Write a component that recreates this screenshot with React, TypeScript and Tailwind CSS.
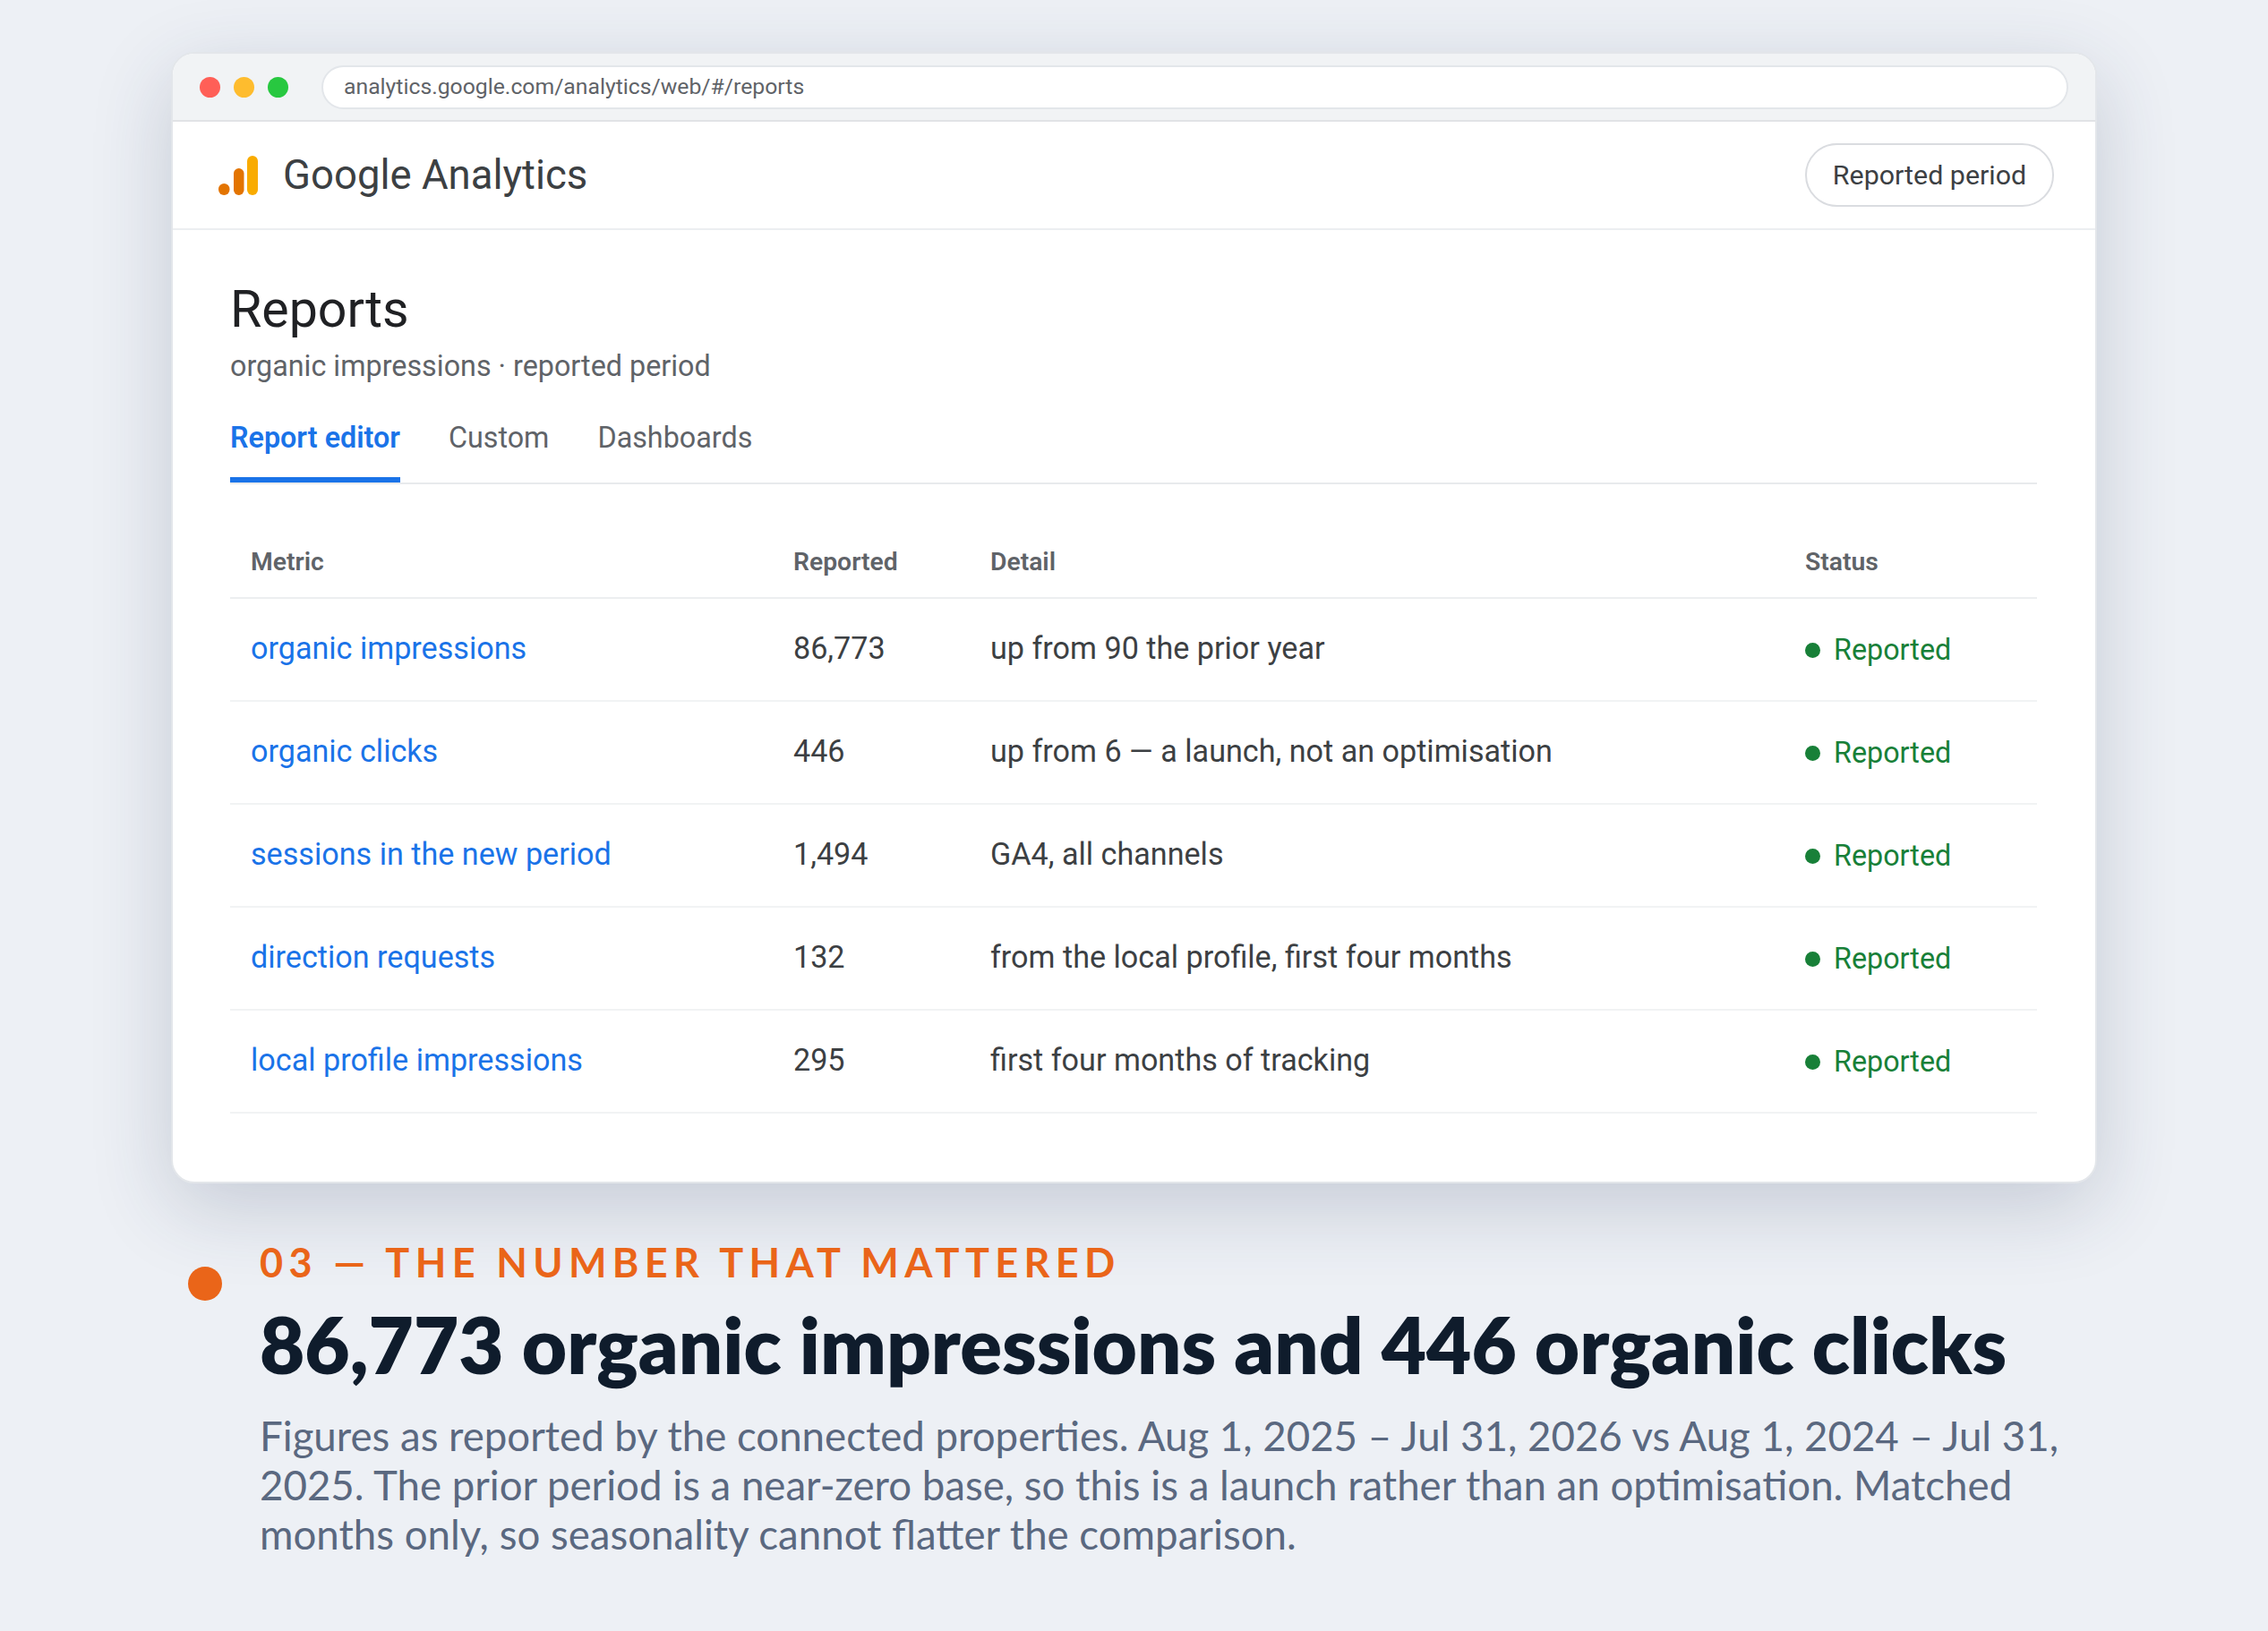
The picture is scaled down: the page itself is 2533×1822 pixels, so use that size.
const rows = [
  { metric: 'organic impressions', value: '86,773', detail: 'up from 90 the prior year' },
  { metric: 'organic clicks', value: '446', detail: 'up from 6 — a launch, not an optimisation' },
  { metric: 'sessions in the new period', value: '1,494', detail: 'GA4, all channels' },
  { metric: 'direction requests', value: '132', detail: 'from the local profile, first four months' },
  { metric: 'local profile impressions', value: '295', detail: 'first four months of tracking' },
];

const App = () => {
  return (
    <div className="min-h-screen w-full bg-[#edf0f5] px-[191px] pt-[58px] [font-family:Roboto,sans-serif]">
      <div className="h-[1264px] w-[2151px] overflow-hidden rounded-[26px] border-2 border-[#e3e6ea] bg-white shadow-[0_26px_90px_rgba(40,55,90,0.2)]">
        <div className="flex h-[76px] items-center border-b-2 border-[#e1e3e6] bg-[#f1f3f5] pl-[30px] pr-[30px]">
          <div className="flex gap-[15px]">
            <span className="h-[23px] w-[23px] rounded-full bg-[#ff5f57]" />
            <span className="h-[23px] w-[23px] rounded-full bg-[#febc2e]" />
            <span className="h-[23px] w-[23px] rounded-full bg-[#28c840]" />
          </div>
          <div className="ml-[37px] flex h-[49px] flex-1 items-center rounded-full border-2 border-[#e3e6ea] bg-white pl-[23px] text-[24.75px] text-[#5f6368]">
            analytics.google.com/analytics/web/#/reports
          </div>
        </div>

        <div className="flex h-[121px] items-center justify-between border-b-2 border-[#eceef1] pl-[51px] pr-[46px]">
          <div className="flex items-center gap-[28px]">
            <svg width="44" height="44" viewBox="0 0 44 44">
              <rect x="0" y="31" width="12.5" height="13" rx="6.25" fill="#e37400" />
              <rect x="17" y="14" width="11.5" height="30" rx="5.75" fill="#e37400" />
              <rect x="32" y="0" width="12" height="44" rx="6" fill="#f9ab00" />
            </svg>
            <span className="pt-[2px] text-[45.5px] text-[#3c4043]">Google Analytics</span>
          </div>
          <div className="flex h-[71px] w-[278px] items-center justify-center rounded-full border-2 border-[#dadce0] text-[30.4px] text-[#3c4043]">
            Reported period
          </div>
        </div>

        <div className="pl-[64px] pr-[65px] pt-[56px]">
          <h1 className="text-[57.3px] leading-[66px] text-[#202124]">Reports</h1>
          <p className="mt-[8px] text-[32.3px] leading-[44px] text-[#5f6368]">organic impressions · reported period</p>

          <div className="mt-[34px] flex h-[76px] gap-[54px] border-b-2 border-[#e8eaed] text-[32.3px] text-[#5f6368]">
            <div className="border-b-[6px] border-[#1a73e8] font-semibold text-[#1a73e8]">Report editor</div>
            <div>Custom</div>
            <div>Dashboards</div>
          </div>

          <table className="mt-[45px] w-full table-fixed border-collapse text-left">
            <colgroup>
              <col className="w-[605px]" />
              <col className="w-[220px]" />
              <col className="w-[910px]" />
              <col className="w-[283px]" />
            </colgroup>
            <thead>
              <tr className="h-[82px] border-b-2 border-[#eceef0] text-[28.3px] text-[#5f6368]">
                <th className="px-[23px] pt-[3px] font-semibold">Metric</th>
                <th className="px-[24px] pt-[3px] font-semibold">Reported</th>
                <th className="px-[24px] pt-[3px] font-semibold">Detail</th>
                <th className="px-[24px] pt-[3px] font-semibold">Status</th>
              </tr>
            </thead>
            <tbody>
              {rows.map((row) => (
                <tr key={row.metric} className="h-[115px] border-b-2 border-[#f1f3f4] text-[34.15px] text-[#3c4043]">
                  <td className="px-[23px] pb-[2px] text-[#1a73e8]">{row.metric}</td>
                  <td className="px-[24px] pb-[2px]">{row.value}</td>
                  <td className="px-[24px] pb-[2px]">{row.detail}</td>
                  <td className="px-[24px] pb-[2px]">
                    <span className="mt-[3px] flex items-center gap-[15px] text-[32.3px] text-[#188038]">
                      <span className="h-[17px] w-[17px] rounded-full bg-[#188038]" />
                      Reported
                    </span>
                  </td>
                </tr>
              ))}
            </tbody>
          </table>
        </div>
      </div>

      <div className="mt-[61px] flex gap-[42px] pl-[19px] [font-family:Lato,sans-serif]">
        <span className="mt-[32px] h-[38px] w-[38px] shrink-0 rounded-full bg-[#ea6519]" />
        <div className="w-[2060px]">
          <div className="text-[45px] font-bold uppercase leading-[55px] tracking-[0.141em] text-[#ea6519]">03 — The number that mattered</div>
          <h2 className="mt-[11px] text-[86.85px] font-extrabold leading-[104px] text-[#0f1c2c]">86,773 organic impressions and 446 organic clicks</h2>
          <p className="mt-[23px] text-[45.62px] leading-[55px] text-[#5a6880]">
            Figures as reported by the connected properties. Aug 1, 2025 – Jul 31, 2026 vs Aug 1, 2024 – Jul 31, 2025. The prior period is a near-zero base, so this is a launch rather than an optimisation. Matched months only, so seasonality cannot flatter the comparison.
          </p>
        </div>
      </div>
    </div>
  );
};

export default App;
